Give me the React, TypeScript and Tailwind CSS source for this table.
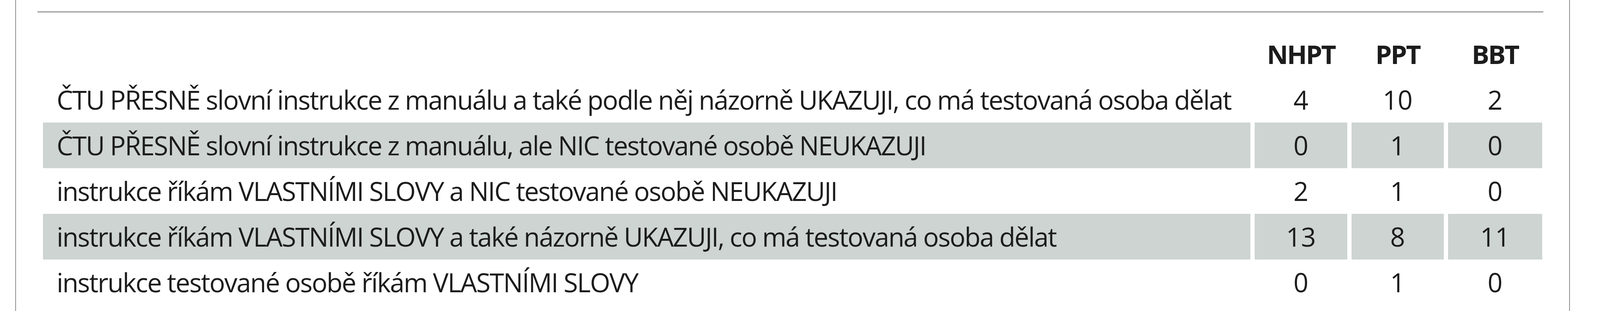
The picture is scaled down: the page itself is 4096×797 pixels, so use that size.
import React from "react";

const rows: { label: string; v: [string, string, string] }[] = [
  { label: "ČTU PŘESNĚ slovní instrukce z manuálu a také podle něj názorně UKAZUJI, co má testovaná osoba dělat", v: ["4", "10", "2"] },
  { label: "ČTU PŘESNĚ slovní instrukce z manuálu, ale NIC testované osobě NEUKAZUJI", v: ["0", "1", "0"] },
  { label: "instrukce říkám VLASTNÍMI SLOVY a NIC testované osobě NEUKAZUJI", v: ["2", "1", "0"] },
  { label: "instrukce říkám VLASTNÍMI SLOVY a také názorně UKAZUJI, co má testovaná osoba dělat", v: ["13", "8", "11"] },
  { label: "instrukce testované osobě říkám VLASTNÍMI SLOVY", v: ["0", "1", "0"] },
];

export default function App() {
  return (
    <div
      className="w-[4096px] h-[797px] bg-white overflow-hidden text-[#1c1c1c]"
      style={{ fontFamily: '"Open Sans", "Noto Sans", sans-serif' }}
    >
      <div className="ml-[39px] w-[3980px] h-full border-l-2 border-r-2 border-[#8e8e8e] flex flex-col">
        <div className="mt-[29px] ml-[55px] w-[3855px] h-[3px] bg-[#9c9c9c]" />
        <div className="mt-[48px] ml-[69px] grid grid-cols-[3091px_237px_236px_241px] gap-x-[11px] text-[67px] leading-[117px]">
          <div className="h-[117px]" />
          <div className="h-[117px] text-center font-bold tracking-[-3px]">NHPT</div>
          <div className="h-[117px] text-center font-bold tracking-[-3px]">PPT</div>
          <div className="h-[117px] text-center font-bold tracking-[-3px]">BBT</div>
          {rows.map((r, i) => {
            const bg = i % 2 === 1 ? "bg-[#cdd4d2]" : "bg-white";
            return (
              <React.Fragment key={i}>
                <div className={`h-[117px] pl-[35px] whitespace-nowrap tracking-[-2.2px] ${bg}`}>{r.label}</div>
                <div className={`h-[117px] text-center ${bg}`}>{r.v[0]}</div>
                <div className={`h-[117px] text-center ${bg}`}>{r.v[1]}</div>
                <div className={`h-[117px] text-center ${bg}`}>{r.v[2]}</div>
              </React.Fragment>
            );
          })}
        </div>
      </div>
    </div>
  );
}
